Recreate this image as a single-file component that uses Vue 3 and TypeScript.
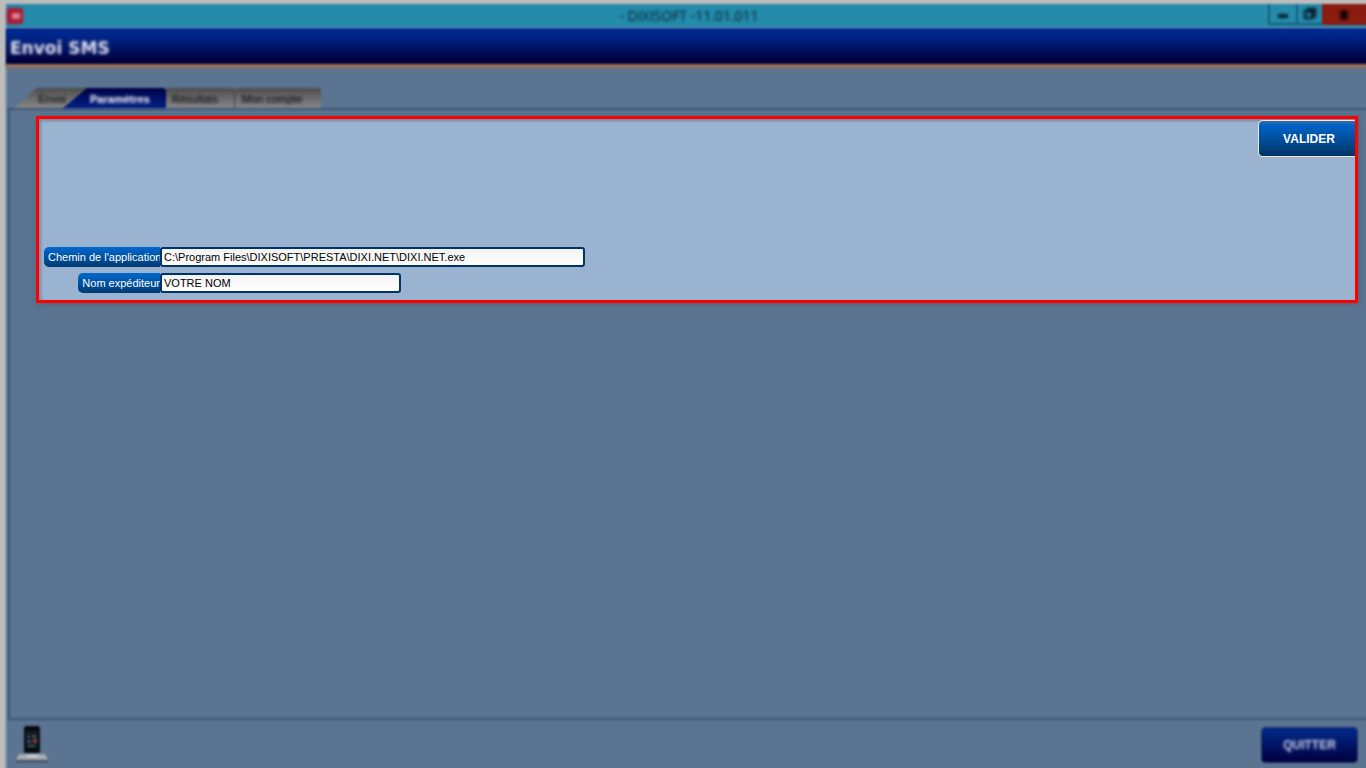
<script setup lang="ts">
import { ref } from 'vue'

interface Tab {
  id: string
  label: string
}

const tabs: Tab[] = [
  { id: 'envoi', label: 'Envoi' },
  { id: 'parametres', label: 'Paramètres' },
  { id: 'resultats', label: 'Résultats' },
  { id: 'compte', label: 'Mon compte' },
]
const activeTab = ref('parametres')
const appPath = ref('C:\\Program Files\\DIXISOFT\\PRESTA\\DIXI.NET\\DIXI.NET.exe')
const sender = ref('VOTRE NOM')
</script>

<template>
  <div class="window">
    <header class="titlebar soft">
      <svg class="app-icon soft" viewBox="0 0 16 16" aria-hidden="true">
        <rect width="16" height="16" rx="2" fill="#b5122f" />
        <path d="M5 8h8M6 6h6v4H6z" stroke="#e9a3b0" stroke-width="1.6" fill="none" />
      </svg>
      <span class="caption soft">- DIXISOFT -11.01.011</span>
      <div class="controls">
        <button type="button" class="control" aria-label="Réduire">
          <svg class="soft" viewBox="0 0 16 16"><path d="M3 10h10" stroke="#06202b" stroke-width="4" /></svg>
        </button>
        <button type="button" class="control restore" aria-label="Restaurer">
          <svg class="soft" viewBox="0 0 16 16">
            <path d="M6 5V3h7v7h-2M3 5.500h7.500V12H3z" stroke="#06202b" stroke-width="2.600" fill="none" />
          </svg>
        </button>
        <button type="button" class="control close" aria-label="Fermer">
          <svg class="soft" viewBox="0 0 16 16"><path d="M5 4l6 8M11 4l-6 8" stroke="#100000" stroke-width="4" /></svg>
        </button>
      </div>
    </header>

    <div class="banner soft"><h1 class="soft">Envoi SMS</h1></div>

    <nav class="tabs soft" role="tablist">
      <button
        v-for="tab in tabs"
        :key="tab.id"
        type="button"
        role="tab"
        :class="['tab', tab.id, { active: tab.id === activeTab }]"
        :aria-selected="tab.id === activeTab"
        @click="activeTab = tab.id"
      >
        <span class="soft">{{ tab.label }}</span>
      </button>
    </nav>

    <main class="page">
      <form class="settings" @submit.prevent>
        <button type="submit" class="validate">VALIDER</button>
        <div class="fields">
          <div class="field">
            <label for="app-path">Chemin de l'application</label>
            <input id="app-path" v-model="appPath" class="wide" type="text" spellcheck="false" />
          </div>
          <div class="field">
            <label for="sender">Nom expéditeur</label>
            <input id="sender" v-model="sender" type="text" spellcheck="false" />
          </div>
        </div>
      </form>
    </main>

    <footer class="bottom">
      <svg class="phone soft" viewBox="0 0 34 38" aria-hidden="true">
        <path d="M4 29h26l3 6H1z" fill="#a7abb2" />
        <path d="M1 35h32v2H1z" fill="#3f4956" />
        <rect x="9" y="1" width="16" height="27" rx="2" fill="#080b10" />
        <rect x="11" y="6" width="12" height="17" fill="#141c24" />
        <path d="M12 10h3v3h-3z" fill="#46305f" />
        <path d="M17 10h4v3h-4z" fill="#315b48" />
        <path d="M12 15h4v3h-4z" fill="#285470" />
        <path d="M18 14h4v4h-4z" fill="#873333" />
        <path d="M13 20h7v2h-7z" fill="#2b5a47" />
        <path d="M12 31h11" stroke="#d1d3d6" stroke-width="2" />
      </svg>
      <button type="button" class="quit soft"><span class="soft">QUITTER</span></button>
    </footer>
  </div>
</template>

<style>
body {
  margin: 0;
}
</style>

<style scoped>
.window,
.window * {
  box-sizing: border-box;
}
.window {
  display: flex;
  flex-direction: column;
  min-height: 100vh;
  padding: 4px 0 0 6px;
  overflow: hidden;
  background: linear-gradient(90deg, #bcbcbc 4px, #5a7491 8px);
  font-family: "Liberation Sans", Arial, sans-serif;
}
button {
  font-family: inherit;
  padding: 0;
  border: 0;
}
.soft {
  filter: blur(1px);
}
.titlebar {
  display: grid;
  grid-template-columns: 1fr auto 1fr;
  align-items: center;
  height: 24px;
  margin-right: -6px;
  background: #258bab;
  box-shadow: 0 -2px 0 4px #bcbcbc;
}
.app-icon {
  width: 16px;
  height: 16px;
  margin-left: 1px;
}
.caption {
  font-family: "Open Sans", "Noto Sans", sans-serif;
  font-size: 14px;
  line-height: 24px;
  color: #031c28;
}
.controls {
  display: flex;
  align-self: start;
  justify-content: flex-end;
}
.control {
  display: flex;
  align-items: center;
  justify-content: center;
  width: 28px;
  height: 21px;
  background: #258bab;
  border: solid #165f79;
  border-width: 0 0 2px 2px;
}
.control.restore {
  width: 26px;
}
.control.close {
  width: 50px;
  padding-right: 6px;
  background: #8a1b10;
  border: 0;
}
.control svg {
  width: 16px;
  height: 16px;
}
.banner {
  position: relative;
  display: flex;
  align-items: center;
  height: 40px;
  margin-right: -6px;
  padding: 3px 4px 0;
  border-bottom: 4px solid #9a7359;
  background: linear-gradient(#00298f, #00268a 8px, #00003c 33px, #00003c);
}
.banner h1 {
  margin: 0;
  font-family: "DejaVu Sans", sans-serif;
  font-size: 17px;
  line-height: 20px;
  color: #dfe3f2;
}
.tabs {
  display: flex;
  align-items: flex-end;
  height: 41px;
  padding-left: 7px;
}
.tab {
  height: 21px;
  padding-top: 1px;
  font-size: 11px;
  line-height: 20px;
  color: #000000;
  background: linear-gradient(#4c4c4c, #8a8a8a);
  border-radius: 3px 3px 0 0;
}
.tab span {
  display: block;
}
.tab.envoi {
  width: 78px;
  clip-path: polygon(0 100%, 24px 0, 100% 0, 100% 100%);
}
.tab.active {
  z-index: 1;
  width: 104px;
  margin-left: -29px;
  padding-left: 12px;
  font-weight: bold;
  color: #ffffff;
  background: linear-gradient(#000044, #00228a);
  clip-path: polygon(0 100%, 25px 0, 100% 0, 100% 100%);
}
.tab.resultats {
  width: 69px;
  padding-right: 10px;
  border-right: 1px solid #404040;
}
.tab.compte {
  width: 86px;
  padding-right: 12px;
}
.page {
  position: relative;
  flex: 1;
  padding: 7px 8px 8px 30px;
}
.page::before {
  content: "";
  position: absolute;
  inset: -1px -6px 0 2px;
  border: 2px solid #3f5779;
  filter: blur(1px);
}
.settings {
  position: relative;
  display: flex;
  flex-direction: column;
  border: 3px solid #ff0000;
  padding: 1px 0 7px 5px;
  background: #9ab3d1;
  box-shadow: 1px 1px 5px #555f6d, inset 2px 2px 3px #7489a3;
}
.validate {
  align-self: flex-end;
  width: 97px;
  height: 37px;
  padding-left: 4px;
  border: 1px solid #f6e8d0;
  border-right: 0;
  border-radius: 5px 0 0 5px;
  background: linear-gradient(#3d6ba3, #0064c8 4px, #003566);
  color: #ffffff;
  font-size: 12px;
  font-weight: bold;
}
.fields {
  display: flex;
  flex-direction: column;
  gap: 6px;
  margin-top: 90px;
}
.field {
  display: grid;
  grid-template-columns: 116px 1fr;
  height: 20px;
}
.field label {
  justify-self: end;
  max-width: 100%;
  height: 20px;
  padding-left: 4px;
  white-space: nowrap;
  border-radius: 5px 0 0 5px;
  background: linear-gradient(#0068ce, #003b73);
  color: #ffffff;
  font-size: 11px;
  line-height: 20px;
}
.field input {
  width: 241px;
  height: 20px;
  padding: 0 2px;
  border: 2px solid #003468;
  border-radius: 3px;
  background: linear-gradient(#f3f3f3, #ffffff);
  color: #000000;
  font-family: inherit;
  font-size: 11px;
  outline: 0;
}
.field input.wide {
  width: 425px;
}
.bottom {
  display: flex;
  align-items: flex-start;
  justify-content: space-between;
  height: 48px;
  padding: 5px 8px 0 9px;
}
.phone {
  width: 34px;
  height: 38px;
}
.quit {
  width: 97px;
  height: 36px;
  margin-top: 2px;
  border: 1px solid #273765;
  border-radius: 4px;
  background: linear-gradient(#00298b, #000040);
  color: #d3d8ec;
  font-size: 12px;
  font-weight: bold;
}
.quit span {
  display: block;
}
</style>
